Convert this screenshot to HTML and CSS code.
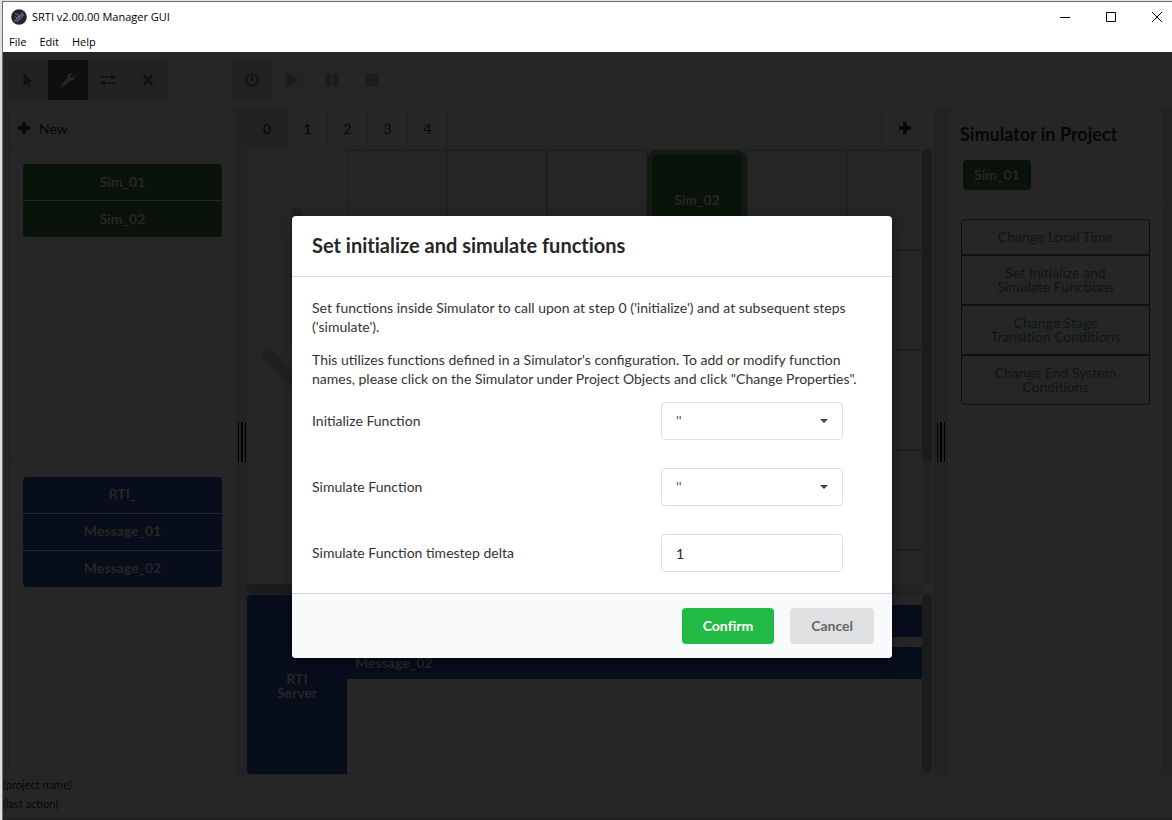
FILE: index.html
```
<!DOCTYPE html>
<html lang="en">
<head>
<meta charset="utf-8">
<title>SRTI v2.00.00 Manager GUI</title>
<link rel="stylesheet" href="styles.css">
</head>
<body>
<div class="window">
  <header class="titlebar">
    <svg class="logo" viewBox="0 0 16 16" aria-hidden="true">
      <circle cx="8" cy="8" r="7.8" fill="#22252a"/>
      <path d="M3.4 12.4 12 3.6" stroke="#3d8f7c" stroke-width="1.3"/>
      <path d="M5.6 13 13 5.2" stroke="#7a4fa8" stroke-width="1.6"/>
      <path d="M4 4.4 7 5.6 8.2 8.4M4.4 7.4 6.6 9.4" stroke="#8a8f94" stroke-width=".8" fill="none"/>
    </svg>
    <span class="window-title">SRTI v2.00.00 Manager GUI</span>
    <div class="window-controls">
      <button type="button" aria-label="Minimize"><svg viewBox="0 0 10 10"><path d="M0 5.5H10"/></svg></button>
      <button type="button" aria-label="Maximize"><svg viewBox="0 0 10 10"><path d="M.5.5h9v9h-9z"/></svg></button>
      <button type="button" aria-label="Close"><svg viewBox="0 0 10 10"><path d="M0 0 10 10M10 0 0 10"/></svg></button>
    </div>
  </header>
  <nav class="menubar">
    <button type="button">File</button>
    <button type="button">Edit</button>
    <button type="button">Help</button>
  </nav>

  <div class="app">
    <div class="toolbar">
      <div class="tool-group">
        <button type="button" aria-label="Select"><svg class="icon" viewBox="-96 0 512 512"><path d="M302.189 329.126H196.105l55.831 135.993c3.889 9.428-.555 19.999-9.444 23.999l-49.165 21.427c-9.165 4-19.443-.571-23.332-9.714l-53.053-129.136-86.664 89.138C18.729 472.71 0 463.554 0 447.977V18.299C0 1.899 19.921-6.096 30.277 5.443l284.412 292.542c11.472 11.179 3.007 31.141-12.5 31.141z"/></svg></button>
        <button type="button" class="active" aria-label="Configure"><svg class="icon" viewBox="0 0 512 512"><path d="M507.73 109.1c-2.24-9.03-13.54-12.09-20.12-5.51l-74.36 74.36-67.88-11.31-11.31-67.88 74.36-74.36c6.62-6.62 3.43-17.9-5.66-20.16-47.38-11.74-99.55.91-136.58 37.93-39.64 39.64-50.55 97.1-34.05 147.2L18.74 402.76c-24.99 24.99-24.99 65.51 0 90.5 24.99 24.99 65.51 24.99 90.5 0l213.21-213.21c50.12 16.71 107.47 5.68 147.37-34.22 37.07-37.07 49.7-89.32 37.91-136.73zM64 472c-13.25 0-24-10.75-24-24 0-13.26 10.75-24 24-24s24 10.74 24 24c0 13.25-10.75 24-24 24z"/></svg></button>
        <button type="button" aria-label="Exchange"><svg class="icon" viewBox="0 0 14 14"><path d="M0 3.2H10V.9L14 4l-4 3V4.8H0zM14 9.2H4V7L0 10l4 3.1v-2.3H14z"/></svg></button>
        <button type="button" aria-label="Delete"><svg class="icon" viewBox="0 0 14 14"><path d="M3.6 1.6 7 5l3.4-3.4 2 2L9 7l3.4 3.4-2 2L7 9l-3.4 3.4-2-2L5 7 1.600 3.600z"/></svg></button>
      </div>
      <div class="tool-group">
        <button type="button" aria-label="Power"><svg class="icon" viewBox="0 0 512 512"><path d="M400 54.100c63 45 104 118.600 104 201.900 0 136.800-110.800 247.700-247.500 248C120 504.300 8.200 393 8 256.400 7.900 173.100 48.900 99.300 111.800 54.200c11.700-8.300 28-4.800 35 7.700L162.600 90c5.900 10.500 3.100 23.800-6.600 31-41.500 30.800-68 79.600-68 134.900-.1 92.300 74.500 168.100 168 168.100 91.600 0 168.600-74.200 168-169.100-.3-51.800-24.700-101.800-68.100-134-9.700-7.200-12.400-20.500-6.500-30.900l15.800-28.100c7-12.400 23.200-16.100 34.800-7.800zM296 264V24c0-13.300-10.700-24-24-24h-32c-13.300 0-24 10.700-24 24v240c0 13.300 10.700 24 24 24h32c13.300 0 24-10.700 24-24z"/></svg></button>
        <button type="button" disabled aria-label="Play"><svg class="icon" viewBox="0 0 14 14"><path d="M1 .8Q1 0 1.900.3L12.600 6.300q.8.700 0 1.400L1.900 13.700Q1 14 1 13.200z"/></svg></button>
        <button type="button" disabled aria-label="Pause"><svg class="icon" viewBox="0 0 14 14"><rect x="1" y="1" width="5" height="12" rx="1"/><rect x="8" y="1" width="5" height="12" rx="1"/></svg></button>
        <button type="button" disabled aria-label="Stop"><svg class="icon" viewBox="0 0 14 14"><rect x="1" y="1" width="12" height="12" rx="1"/></svg></button>
      </div>
    </div>

    <main class="workspace">
      <section class="panel objects">
        <button type="button" class="new-button"><svg class="plus" viewBox="0 0 14 14"><path d="M5.300 1h3.400v4.300H13v3.400H8.700V13H5.300V8.700H1V5.300h4.300z"/></svg>New</button>
        <div class="object-list">
          <div class="stack sims">
            <button type="button">Sim_01</button>
            <button type="button">Sim_02</button>
          </div>
        </div>
        <div class="object-list">
          <div class="stack messages">
            <button type="button">RTI_</button>
            <button type="button">Message_01</button>
            <button type="button">Message_02</button>
          </div>
        </div>
      </section>

      <div class="gutter"><span class="grip"></span></div>

      <section class="panel stages">
        <div class="tabs">
          <button type="button" class="active">0</button>
          <button type="button">1</button>
          <button type="button">2</button>
          <button type="button">3</button>
          <button type="button">4</button>
          <button type="button" class="add-stage" aria-label="Add stage"><svg class="plus" viewBox="0 0 14 14"><path d="M5.300 1h3.400v4.300H13v3.400H8.700V13H5.300V8.700H1V5.300h4.300z"/></svg></button>
        </div>
        <div class="canvas">
          <div class="canvas-view">
            <svg class="timeline" viewBox="0 0 100 430" aria-hidden="true"><path d="M50 63V190M20 204 68 250"/></svg>
            <div class="grid"><div class="node">Sim_02</div></div>
          </div>
          <div class="track vertical"><span class="thumb"></span></div>
          <div class="track horizontal"><span class="thumb"></span></div>
        </div>
        <div class="server">
          <div class="server-block">RTI<br>Server</div>
          <div class="server-rows">
            <div class="server-row">Message_01</div>
            <div class="server-row">Message_02</div>
          </div>
          <div class="track server-track"><span class="thumb"></span></div>
        </div>
      </section>

      <div class="gutter right"><span class="grip"></span></div>

      <aside class="panel details">
        <div class="details-head">
          <h2>Simulator in Project</h2>
          <span class="tag">Sim_01</span>
        </div>
        <div class="details-actions">
          <button type="button">Change Local Time</button>
          <button type="button">Set Initialize and<br>Simulate Functions</button>
          <button type="button">Change Stage<br>Transition Conditions</button>
          <button type="button">Change End System<br>Conditions</button>
        </div>
      </aside>
      <div class="edge"></div>
    </main>

    <footer class="status">
      <div>(project name)</div>
      <div>(last action)</div>
    </footer>

    <div class="overlay">
      <form class="modal" role="dialog" aria-labelledby="modal-title">
        <h1 id="modal-title">Set initialize and simulate functions</h1>
        <div class="modal-body">
          <p>Set functions inside Simulator to call upon at step 0 ('initialize') and at subsequent steps ('simulate').</p>
          <p>This utilizes functions defined in a Simulator's configuration. To add or modify function names, please click on the Simulator under Project Objects and click "Change Properties".</p>
          <div class="fields">
            <label for="init-fn">Initialize Function</label>
            <div class="select">
              <select id="init-fn"><option>''</option></select>
              <svg class="caret" viewBox="0 0 8 4" aria-hidden="true"><path d="M0 0h8L4 4z"/></svg>
            </div>
            <label for="sim-fn">Simulate Function</label>
            <div class="select">
              <select id="sim-fn"><option>''</option></select>
              <svg class="caret" viewBox="0 0 8 4" aria-hidden="true"><path d="M0 0h8L4 4z"/></svg>
            </div>
            <label for="delta">Simulate Function timestep delta</label>
            <input id="delta" type="text" value="1">
          </div>
        </div>
        <div class="modal-actions">
          <button type="button" class="confirm">Confirm</button>
          <button type="button" class="cancel">Cancel</button>
        </div>
      </form>
    </div>
  </div>
</div>
</body>
</html>
```

FILE: styles.css
```
:root {
  --bg: #262626;
  --line: #212121;
  --gutter: #232323;
  --thumb: #1b1b1b;
  --ink: #060606;
  --green: #0a130a;
  --blue: #070d1b;
  --on-color: #262626;
}

* { box-sizing: border-box; }

html {
  background: #dfe1e1;
  padding-top: 1px;
}

body {
  margin: 0;
  font-family: Lato, "Liberation Sans", sans-serif;
  font-size: 14px;
  line-height: 19px;
}

button {
  font: inherit;
  color: inherit;
  background: none;
  border: 0;
  margin: 0;
  padding: 0;
}

h1, h2, button { font-variant-ligatures: none; }

.window {
  min-height: calc(100vh - 1px);
  display: flex;
  flex-direction: column;
  background: #fff;
  border-top: 1px solid #6d7070;
  border-left: 1px solid #6d7070;
  margin-left: 2px;
}

/* Window chrome */
.titlebar {
  display: flex;
  align-items: center;
  height: 30px;
  padding: 0 10px 0 8px;
  font: 11px/14px "Open Sans", "Noto Sans", sans-serif;
  color: #000;
}

.logo { width: 16px; height: 16px; margin-right: 5px; }

.window-controls {
  display: flex;
  gap: 36px;
  margin-left: auto;
}

.window-controls svg {
  display: block;
  width: 10px;
  height: 10px;
  fill: none;
  stroke: #000;
  overflow: visible;
}

.menubar {
  display: flex;
  align-items: center;
  gap: 13px;
  height: 20px;
  padding-left: 6px;
  font: 11px/14px "Open Sans", "Noto Sans", sans-serif;
  color: #000;
}

/* Application */
.app {
  position: relative;
  flex: 1;
  display: flex;
  flex-direction: column;
  background: var(--bg);
  color: var(--ink);
  overflow: hidden;
}

.toolbar {
  display: flex;
  gap: 64px;
  padding: 8px 5px;
}

.tool-group {
  display: flex;
  border-radius: 4px;
  overflow: hidden;
}

.tool-group button {
  display: grid;
  place-items: center;
  width: 40px;
  height: 40px;
  background: #212322;
  color: #111;
}

.tool-group .active { background: #0f0f0f; color: #262626; }
.tool-group button:disabled { background: #242525; color: #1b1b1b; }

.icon { width: 14px; height: 14px; fill: currentColor; }
.plus { width: 14px; height: 14px; fill: currentColor; }

.workspace {
  flex: 1;
  display: flex;
  padding-left: 5px;
}

.panel {
  display: flex;
  flex-direction: column;
  border: 1px solid var(--line);
  border-radius: 4px;
}

.objects { width: 229px; }

.new-button {
  display: flex;
  align-items: center;
  gap: 8px;
  height: 41px;
  padding: 0 0 2px 8px;
  border-bottom: 1px solid var(--line);
}

.object-list { flex: 1; padding: 14px; }
.object-list + .object-list { border-top: 1px solid var(--line); }

.stack {
  display: flex;
  flex-direction: column;
  gap: 1px;
  border-radius: 4px;
  overflow: hidden;
}

.stack button {
  height: 36px;
  padding-bottom: 2px;
  font-weight: 700;
  color: var(--on-color);
}

.sims button { background: var(--green); }
.messages button { background: var(--blue); }

.gutter {
  display: flex;
  flex-direction: column;
  align-items: center;
  justify-content: center;
  width: 9px;
  background: var(--gutter);
}

.gutter.right { width: 12px; }

.grip {
  width: 8px;
  height: 40px;
  background: linear-gradient(to right, #000 1px, transparent 1px 3px, #000 3px 5px, transparent 5px 7px, #000 7px);
}

.stages { flex: 1; min-width: 0; }

.tabs {
  display: flex;
  height: 41px;
  border-bottom: 1px solid var(--line);
}

.tabs button {
  width: 40px;
  padding-bottom: 2px;
  border-right: 1px solid var(--line);
}

.tabs .active { width: 41px; background: #202322; }

.tabs .add-stage {
  display: grid;
  place-items: center;
  width: 53px;
  padding-right: 6px;
  margin-left: auto;
  border-right: 0;
  border-left: 1px solid var(--line);
}

.canvas {
  flex: 1;
  display: grid;
  grid-template-columns: 1fr 10px;
  grid-template-rows: 1fr 10px;
  padding-right: 2px;
}

.canvas-view { display: flex; min-width: 0; overflow: hidden; }

.timeline {
  width: 100px;
  height: 430px;
  fill: none;
  stroke: #202020;
  stroke-width: 12;
  stroke-linecap: round;
}

.grid {
  flex: 1;
  display: grid;
  grid-template-columns: repeat(auto-fill, 100px);
  grid-auto-rows: 100px;
  background:
    linear-gradient(to right, #202020 1px, transparent 1px 99px, #202020 99px) 0 0 / 100px 100px,
    linear-gradient(#202020 1px, transparent 1px 99px, #202020 99px) 0 0 / 100px 100px;
}

.node {
  grid-column: 4;
  display: grid;
  place-items: center;
  padding-bottom: 2px;
  background: var(--green);
  border: 5px solid #111b11;
  border-radius: 10px;
  font-weight: 700;
  color: var(--on-color);
}

.track { display: flex; background: var(--gutter); }

.thumb { background: var(--thumb); border-radius: 5px; }
.vertical .thumb { width: 100%; height: 72%; }
.horizontal .thumb { width: 96%; }

.server {
  display: flex;
  height: 180px;
  border-top: 1px solid var(--line);
}

.server-block {
  display: grid;
  place-items: center;
  width: 100px;
  padding-top: 2px;
  border-radius: 4px 0 0 4px;
  background: var(--blue);
  font-weight: 700;
  line-height: 14px;
  text-align: center;
  color: var(--on-color);
}

.server-rows {
  flex: 1;
  display: flex;
  flex-direction: column;
  gap: 10px;
  padding-top: 10px;
}

.server-row {
  height: 32px;
  padding-left: 8px;
  background: var(--blue);
  font-weight: 700;
  line-height: 32px;
  color: var(--on-color);
}

.server-track { width: 10px; padding-bottom: 3px; margin-right: 2px; }
.server-track .thumb { width: 100%; }

.details { width: 217px; }

.details-head {
  height: 96px;
  padding: 15px 12px;
  border-bottom: 1px solid var(--line);
}

.details-head h2 {
  margin: 0 0 16px;
  font-size: 18px;
  line-height: 20px;
  font-weight: 700;
}

.tag {
  display: inline-block;
  margin-left: 3px;
  padding: 0 11px;
  border-radius: 4px;
  background: var(--green);
  color: var(--on-color);
  font-weight: 700;
  line-height: 30px;
}

.details-actions {
  display: flex;
  flex-direction: column;
  padding: 14px 13px;
}

.details-actions button {
  padding: 10px 0;
  border: 1px solid var(--green);
  line-height: 14px;
  color: #0e170e;
}

.details-actions button:first-child { border-radius: 4px 4px 0 0; }
.details-actions button:last-child { border-radius: 0 0 4px 4px; }

.edge { width: 8px; background: var(--gutter); }

.status {
  height: 45px;
  font-size: 11px;
  border-bottom: 2px solid #202020;
}

/* Dialog */
.overlay {
  position: absolute;
  inset: 0;
  display: grid;
  place-items: center;
  padding: 2px 0 0 9px;
}

.modal {
  width: 600px;
  max-width: 100%;
  background: #fff;
  border-radius: 4px;
  box-shadow: 1px 3px 3px rgba(0, 0, 0, .2), 1px 3px 15px 2px rgba(0, 0, 0, .2);
  color: #333;
  overflow: hidden;
}

.modal h1 {
  margin: 0;
  padding: 17px 20px 19px;
  border-bottom: 1px solid #dededf;
  font-size: 20px;
  line-height: 24px;
  font-weight: 700;
  color: #262626;
}

.modal-body { padding: 21px 20px; }
.modal-body p { margin: 0 0 14px; }

.fields {
  display: grid;
  grid-template-columns: 1fr 182px;
  row-gap: 28px;
  align-items: center;
  margin-right: 29px;
}

.fields label { padding-bottom: 2px; }

.select { position: relative; }

.fields select,
.fields input {
  appearance: none;
  display: block;
  width: 100%;
  height: 38px;
  padding: 0 14px;
  border: 1px solid #dededf;
  border-radius: 4px;
  background: #fff;
  font: inherit;
  color: #262626;
}

.fields select { padding-bottom: 2px; color: #555; }

.caret {
  position: absolute;
  right: 15px;
  top: 17px;
  width: 8px;
  height: 4px;
  fill: #404040;
}

.modal-actions {
  display: flex;
  justify-content: flex-end;
  gap: 16px;
  padding: 14px 18px;
  border-top: 1px solid #d4d4d5;
  background: #f9fafb;
}

.modal-actions button {
  height: 36px;
  padding: 0 21px 2px;
  border-radius: 4px;
  font-weight: 700;
}

.modal-actions .confirm { background: #21ba45; color: #fff; }
.modal-actions .cancel { background: #e0e1e2; color: #666; }
```
